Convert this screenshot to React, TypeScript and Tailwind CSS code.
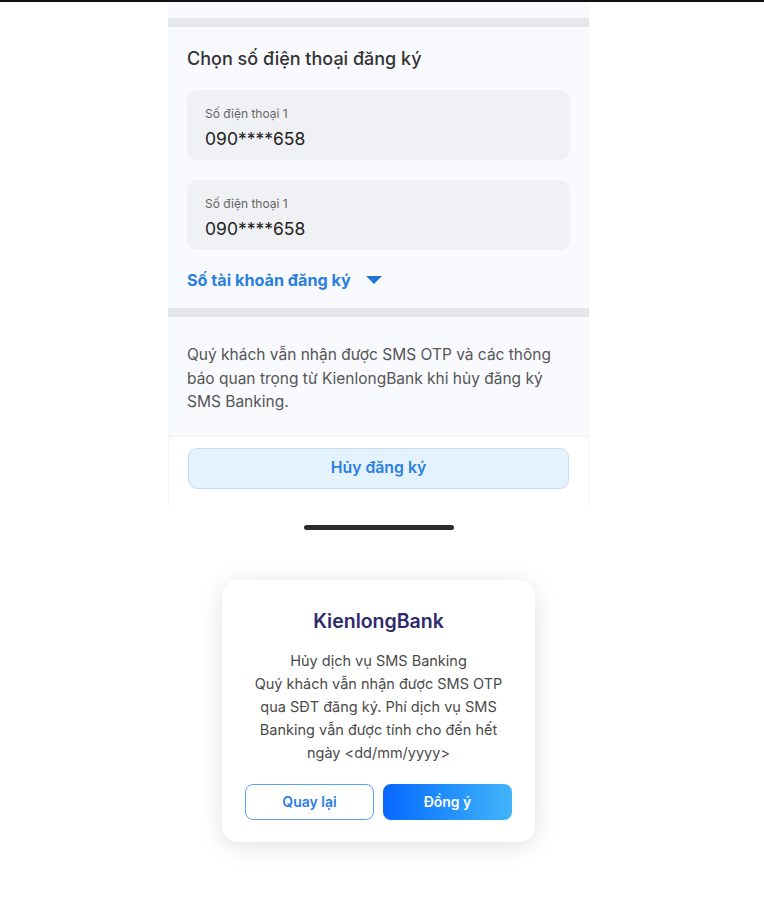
import React from "react";

export default function App() {
  const font = { fontFamily: "Inter, 'Noto Sans', sans-serif" };
  return (
    <div className="min-h-[911px] w-[764px] bg-white" style={font}>
      <div className="h-[2px] w-full bg-[#111]" />
      <div className="ml-[168px] w-[421px]">
        <div className="h-[16px] bg-[#f9fafd]" />
        <div className="h-[9px] bg-[#e6e7eb]" />
        <div className="bg-[#f9fafd] px-[19px] pt-[20px] pb-[16px]">
          <div className="text-[18px] leading-[24px] font-medium text-[#333]">Chọn số điện thoại đăng ký</div>
          <div className="mt-[19px] h-[70px] rounded-[10px] bg-[#f0f1f4] px-[18px] pt-[16px]">
            <div className="text-[12px] leading-[16px] text-[#666]">Số điện thoại 1</div>
            <div className="mt-[5px] text-[17.5px] leading-[24px] text-[#222]">090****658</div>
          </div>
          <div className="mt-[20px] h-[70px] rounded-[10px] bg-[#f0f1f4] px-[18px] pt-[16px]">
            <div className="text-[12px] leading-[16px] text-[#666]">Số điện thoại 1</div>
            <div className="mt-[5px] text-[17.5px] leading-[24px] text-[#222]">090****658</div>
          </div>
          <div className="mt-[18px] flex items-center h-[24px]">
            <span className="text-[16.2px] font-bold text-[#2a7fe0]">Số tài khoản đăng ký</span>
            <svg width="16" height="9" viewBox="0 0 16 9" className="ml-[15px]">
              <path d="M0 0 H16 L8 8 Z" fill="#1f74d6" />
            </svg>
          </div>
        </div>
        <div className="h-[9px] bg-[#e6e7eb]" />
        <div className="bg-[#f9fafd] px-[19px] pt-[26px] pb-[22px]">
          <p className="text-[15.5px] leading-[23.5px] text-[#555] whitespace-nowrap">
            Quý khách vẫn nhận được SMS OTP và các thông
            <br />
            báo quan trọng từ KienlongBank khi hủy đăng ký
            <br />
            SMS Banking.
          </p>
        </div>
        <div className="bg-white border-x border-t border-[#f2f3f5] px-[19px] pt-[11px] pb-[17px]">
          <div className="h-[41px] rounded-[9px] border border-[#c2ddf4] bg-[#e4f2fd] flex items-center justify-center text-[15.8px] font-semibold text-[#2a7fe0]">
            Hủy đăng ký
          </div>
        </div>
      </div>
      <div className="mt-[19px] ml-[304px] h-[5px] w-[150px] rounded-full bg-[#2b2b2b]" />
      <div className="mt-[50px] ml-[222px] w-[313px] rounded-[16px] bg-white px-[23px] pt-[29px] pb-[22px] shadow-[0_4px_24px_rgba(0,0,0,0.12)]">
        <div className="text-center text-[19.5px] leading-[24px] font-semibold text-[#2e2a6b]">KienlongBank</div>
        <p className="mt-[16px] text-center text-[14.5px] leading-[23px] text-[#4a4a4a]">
          Hủy dịch vụ SMS Banking
          <br />
          Quý khách vẫn nhận được SMS OTP
          <br />
          qua SĐT đăng ký. Phí dịch vụ SMS
          <br />
          Banking vẫn được tính cho đến hết
          <br />
          ngày &lt;dd/mm/yyyy&gt;
        </p>
        <div className="mt-[20px] flex gap-[9px]">
          <div className="h-[36px] w-[129px] rounded-[8px] border border-[#5b9ff0] flex items-center justify-center text-[14px] font-semibold text-[#2b7de9]">
            Quay lại
          </div>
          <div className="h-[36px] w-[129px] rounded-[8px] bg-gradient-to-r from-[#0a66ff] to-[#42b4f8] flex items-center justify-center text-[14px] font-semibold text-white">
            Đồng ý
          </div>
        </div>
      </div>
    </div>
  );
}
